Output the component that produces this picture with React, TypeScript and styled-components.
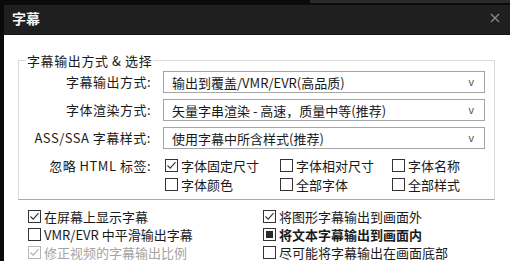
import React from "react";
import styled, { createGlobalStyle } from "styled-components";

const GlobalStyle = createGlobalStyle`
  html, body { margin: 0; padding: 0; background: #0a0a0a; }
  body {
    font-family: "Noto Sans CJK SC", "Noto Sans", "Liberation Sans", sans-serif;
    font-size: 13px;
    color: #1a1a1a;
  }
  * { box-sizing: border-box; }
`;

const Window = styled.div`
  width: 510px;
  height: 261px;
  overflow: hidden;
  background: #0a0a0a;
  display: flex;
  flex-direction: column;
`;

const TopStrip = styled.div`
  height: 5px;
  display: flex;
  justify-content: flex-end;
`;

const TopStripPiece = styled.div`
  width: 200px;
  height: 3px;
  background: #2b2b2b;
`;

const TitleBar = styled.div`
  height: 31px;
  margin-left: 4px;
  background: #1f1f1f;
  display: flex;
  align-items: center;
  justify-content: space-between;
  padding: 0 8px 0 8px;
  border-bottom: 1px solid #141414;
`;

const Title = styled.span`
  color: #f4f4f4;
  font-size: 14px;
  font-weight: 700;
  line-height: 1;
  margin-top: -2px;
`;

const CloseButton = styled.span`
  width: 10px;
  height: 10px;
  display: flex;
  margin-right: 2px;
  margin-top: -2px;
`;

const Body = styled.div`
  flex: 1;
  margin-left: 4px;
  background: #ffffff;
  padding: 18px 15px 0 14px;
  display: flex;
  flex-direction: column;
`;

const Group = styled.fieldset`
  margin: 0;
  padding: 3px 9px 5px 0;
  border: 1px solid #dadada;
  border-bottom-color: #a8a8a8;
  display: grid;
  grid-template-columns: 136px 1fr;
  column-gap: 8px;
  row-gap: 6px;
  align-items: center;
`;

const Legend = styled.legend`
  padding: 0 1px;
  margin-left: 7px;
  font-size: 13px;
  line-height: 15px;
  letter-spacing: 0.6px;
  color: #1a1a1a;
`;

const Label = styled.div`
  text-align: right;
  white-space: nowrap;
  line-height: 22px;
  letter-spacing: 0.5px;
  padding-right: 4px;
`;

const Select = styled.div`
  height: 22px;
  border: 1px solid #a6a6a6;
  background: #fff;
  display: flex;
  align-items: center;
  justify-content: space-between;
  padding: 0 10px 0 8px;
  white-space: nowrap;
  line-height: 1;
`;

const Arrow = styled.span`
  font-family: "Liberation Sans", sans-serif;
  font-size: 11px;
  color: #555;
`;

const TagRows = styled.div`
  grid-column: 1 / -1;
  display: grid;
  grid-template-columns: 136px 1fr;
  column-gap: 8px;
  margin-top: 1px;
  align-items: start;
`;

const TagLabel = styled(Label)`
  line-height: 19px;
`;

const CheckGrid = styled.div`
  display: grid;
  grid-template-columns: 115px 112px auto;
  grid-auto-rows: 19px;
  margin-left: 2px;
  align-items: center;
`;

const Options = styled.div`
  display: grid;
  grid-template-columns: 235px 1fr;
  grid-auto-rows: 18px;
  padding: 7px 0 0 10px;
  align-items: center;
`;

type BoxState = "checked" | "unchecked" | "mixed";

const Item = styled.label<{ $disabled?: boolean; $bold?: boolean }>`
  display: flex;
  align-items: center;
  gap: 3px;
  white-space: nowrap;
  color: ${(p) => (p.$disabled ? "#a3a3a3" : "#1a1a1a")};
  font-weight: ${(p) => (p.$bold ? 700 : 400)};
  line-height: 1;
`;

const Box = styled.span<{ $disabled?: boolean }>`
  width: 13px;
  height: 13px;
  flex: none;
  border: 1px solid ${(p) => (p.$disabled ? "#b8b8b8" : "#333")};
  background: #fff;
  display: flex;
  align-items: center;
  justify-content: center;
`;

const MixedFill = styled.span`
  width: 7px;
  height: 7px;
  background: #2a2a2a;
`;

function Check({
  state = "unchecked",
  disabled,
  bold,
  children,
}: {
  state?: BoxState;
  disabled?: boolean;
  bold?: boolean;
  children: React.ReactNode;
}) {
  return (
    <Item $disabled={disabled} $bold={bold}>
      <Box $disabled={disabled}>
        {state === "checked" && (
          <svg width="11" height="11" viewBox="0 0 11 11">
            <polyline
              points="1.5,5.5 4.2,8.2 9.5,2.2"
              fill="none"
              stroke={disabled ? "#b0b0b0" : "#333"}
              strokeWidth="1.1"
            />
          </svg>
        )}
        {state === "mixed" && <MixedFill />}
      </Box>
      <span>{children}</span>
    </Item>
  );
}

export default function App() {
  return (
    <>
      <GlobalStyle />
      <Window>
        <TopStrip>
          <TopStripPiece />
        </TopStrip>
        <TitleBar>
          <Title>字幕</Title>
          <CloseButton>
            <svg width="10" height="10" viewBox="0 0 10 10">
              <path d="M1 1 L9 9 M9 1 L1 9" stroke="#8a8a8a" strokeWidth="1.3" />
            </svg>
          </CloseButton>
        </TitleBar>
        <Body>
          <Group>
            <Legend>字幕输出方式 &amp; 选择</Legend>
            <Label>字幕输出方式:</Label>
            <Select>
              <span>输出到覆盖/VMR/EVR(高品质)</span>
              <Arrow>v</Arrow>
            </Select>
            <Label>字体渲染方式:</Label>
            <Select>
              <span>矢量字串渲染 - 高速，质量中等(推荐)</span>
              <Arrow>v</Arrow>
            </Select>
            <Label>ASS/SSA 字幕样式:</Label>
            <Select>
              <span>使用字幕中所含样式(推荐)</span>
              <Arrow>v</Arrow>
            </Select>
            <TagRows>
              <TagLabel>忽略 HTML 标签:</TagLabel>
              <CheckGrid>
                <Check state="checked">字体固定尺寸</Check>
                <Check>字体相对尺寸</Check>
                <Check>字体名称</Check>
                <Check>字体颜色</Check>
                <Check>全部字体</Check>
                <Check>全部样式</Check>
              </CheckGrid>
            </TagRows>
          </Group>
          <Options>
            <Check state="checked">在屏幕上显示字幕</Check>
            <Check state="checked">将图形字幕输出到画面外</Check>
            <Check>VMR/EVR 中平滑输出字幕</Check>
            <Check state="mixed" bold>
              将文本字幕输出到画面内
            </Check>
            <Check state="checked" disabled>
              修正视频的字幕输出比例
            </Check>
            <Check>尽可能将字幕输出在画面底部</Check>
          </Options>
        </Body>
      </Window>
    </>
  );
}
